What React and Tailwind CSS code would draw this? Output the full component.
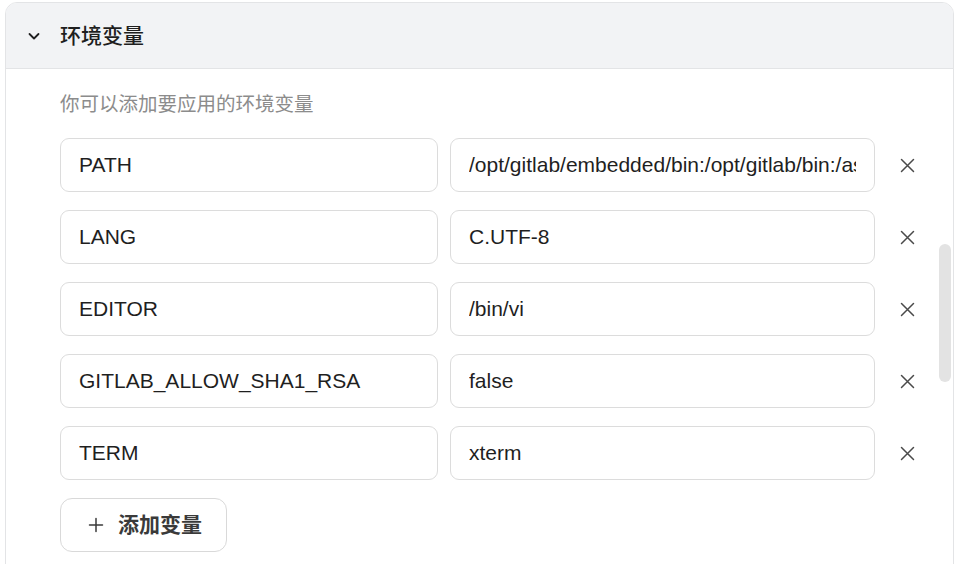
import React, { useState } from "react";

const iniciais = [
  { chave: "PATH", valor: "/opt/gitlab/embedded/bin:/opt/gitlab/bin:/assets:/usr/local/sbin:/usr/local/bin:/usr/sbin:/usr/bin:/sbin:/bin" },
  { chave: "LANG", valor: "C.UTF-8" },
  { chave: "EDITOR", valor: "/bin/vi" },
  { chave: "GITLAB_ALLOW_SHA1_RSA", valor: "false" },
  { chave: "TERM", valor: "xterm" },
];

const fonte = {
  fontFamily: '"Liberation Sans", Arial, "Noto Sans CJK SC", sans-serif',
};

export default function App() {
  const [aberto, setAberto] = useState(true);
  const [vars, setVars] = useState(iniciais);

  const atualizar = (i, campo, v) =>
    setVars((prev) => prev.map((it, j) => (j === i ? { ...it, [campo]: v } : it)));
  const remover = (i) => setVars((prev) => prev.filter((_, j) => j !== i));
  const adicionar = () => setVars((prev) => [...prev, { chave: "", valor: "" }]);

  return (
    <div className="min-h-screen bg-white pl-[5px] pt-[2px]" style={fonte}>
      <div className="relative w-[949px] rounded-t-[12px] border border-[#e3e4e6] overflow-hidden">
        {/* cabeçalho */}
        <button
          onClick={() => setAberto(!aberto)}
          className="flex h-[66px] w-full items-center bg-[#f2f3f5] border-b border-[#e3e4e6] pl-[21px] text-left"
        >
          <svg width="14" height="14" viewBox="0 0 14 14" className={aberto ? "" : "-rotate-90"}>
            <path d="M2.5 5 L7 9.5 L11.5 5" fill="none" stroke="#1f1f1f" strokeWidth="1.8" strokeLinecap="round" strokeLinejoin="round" />
          </svg>
          <span className="ml-[19px] text-[21px] font-medium text-[#1f1f1f]">环境变量</span>
        </button>

        {aberto && (
          <div className="pl-[54px] pt-[21px] pb-[24px]">
            <p className="text-[19.5px] leading-[28px] text-[#8c8c8c]">你可以添加要应用的环境变量</p>

            <div className="mt-[20px] flex flex-col gap-[18px]">
              {vars.map((v, i) => (
                <div key={i} className="flex items-center">
                  <input
                    value={v.chave}
                    onChange={(e) => atualizar(i, "chave", e.target.value)}
                    className="h-[54px] w-[378px] rounded-[9px] border border-[#dcdcdc] px-[18px] text-[21px] text-[#1f1f1f] outline-none focus:border-[#999]"
                  />
                  <input
                    value={v.valor}
                    onChange={(e) => atualizar(i, "valor", e.target.value)}
                    className="ml-[12px] h-[54px] w-[425px] rounded-[9px] border border-[#dcdcdc] px-[18px] text-[21px] text-[#1f1f1f] outline-none focus:border-[#999]"
                  />
                  <button
                    onClick={() => remover(i)}
                    className="ml-[17px] flex h-[30px] w-[30px] items-center justify-center"
                  >
                    <svg width="15" height="15" viewBox="0 0 15 15">
                      <path d="M1.5 1.5 L13.5 13.5 M13.5 1.5 L1.5 13.5" stroke="#4a4a4a" strokeWidth="1.5" strokeLinecap="round" />
                    </svg>
                  </button>
                </div>
              ))}

              <div>
                <button
                  onClick={adicionar}
                  className="flex h-[54px] items-center rounded-[12px] border border-[#d9d9d9] bg-white pl-[27px] pr-[24px] text-[21px] font-bold text-[#3a3a3a] hover:bg-gray-50"
                >
                  <svg width="16" height="16" viewBox="0 0 16 16">
                    <path d="M8 1.5 V14.5 M1.5 8 H14.5" stroke="#3a3a3a" strokeWidth="1.5" strokeLinecap="round" />
                  </svg>
                  <span className="ml-[14px]">添加变量</span>
                </button>
              </div>
            </div>
          </div>
        )}

        {/* barra de rolagem */}
        <div className="absolute right-[2px] top-[241px] h-[138px] w-[12px] rounded-full bg-[#e3e3e3]" />
      </div>
    </div>
  );
}
